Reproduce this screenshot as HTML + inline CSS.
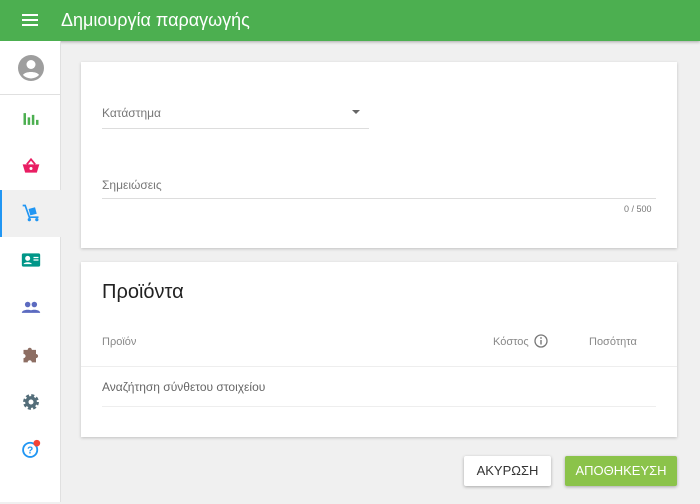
<!DOCTYPE html>
<html><head><meta charset="utf-8"><style>
*{margin:0;padding:0;box-sizing:border-box}
body{width:700px;height:504px;background:#f0f0f0;font-family:"Liberation Sans",sans-serif;position:relative;overflow:hidden}
.top{position:absolute;left:0;top:0;width:700px;height:41px;background:#4caf50;box-shadow:0 1px 3px rgba(0,0,0,.3);color:#fff}
.top .t{position:absolute;left:61px;top:10px;font-size:18px}
.side{position:absolute;left:0;top:41px;width:61px;height:461px;background:#fff;border-right:1px solid #e0e0e0}
.ic{position:absolute;left:21px;width:20px;height:20px}
.card{position:absolute;left:81px;width:596px;background:#fff;box-shadow:0 1px 3px rgba(0,0,0,.2)}
.lbl{position:absolute;font-size:12px;color:#777}
.line{position:absolute;height:1px;background:#ddd}
.btn{position:absolute;top:456px;height:30px;font-size:13px;text-align:center;line-height:30px;box-shadow:0 1px 3px rgba(0,0,0,.3);border-radius:2px}
</style></head><body>
<div class="top">
<svg style="position:absolute;left:22px;top:13px" width="16" height="14"><rect y="1" width="16" height="2" fill="#fff"/><rect y="6" width="16" height="2" fill="#fff"/><rect y="11" width="16" height="2" fill="#fff"/></svg>
<div class="t">Δημιουργία παραγωγής</div></div>
<div class="side">
<svg style="position:absolute;left:18px;top:14px" width="26" height="26" viewBox="0 0 26 26"><circle cx="13" cy="13" r="13" fill="#9e9e9e"/><circle cx="13" cy="9.5" r="4.5" fill="#fff"/><path d="M5 20c2-4 14-4 16 0a11 11 0 0 1-16 0z" fill="#fff"/></svg>
<div style="position:absolute;left:0;top:53px;width:61px;height:1px;background:#e0e0e0"></div>
<svg class="ic" style="top:68px" viewBox="0 0 24 24"><path d="M3 5h3v14H3zM8 10h3v9H8zM13 7h3v12h-3zM18 13h3v6h-3z" fill="#4caf50"/></svg>
<svg class="ic" style="top:115px" viewBox="0 0 24 24"><path d="M2 10h20l-3 10H5z" fill="#e91e63"/><path d="M7 10l5-6 5 6" stroke="#e91e63" stroke-width="2.2" fill="none"/><circle cx="12" cy="15" r="1.8" fill="#fff"/></svg>
<div style="position:absolute;left:0;top:149px;width:61px;height:47px;background:#f0f0f0;border-left:2px solid #2196f3"></div>
<svg class="ic" style="top:162px" viewBox="0 0 24 24"><path d="M2 3h3l5 14h11" stroke="#2196f3" stroke-width="2" fill="none"/><rect x="10" y="6" width="8" height="8" fill="#2196f3" transform="rotate(-15 14 10)"/><circle cx="10" cy="20" r="2" fill="#2196f3"/><circle cx="19" cy="20" r="2" fill="#2196f3"/></svg>
<svg class="ic" style="top:209px" viewBox="0 0 24 24"><rect x="1" y="4" width="22" height="16" rx="2" fill="#009688"/><circle cx="8" cy="10" r="3" fill="#fff"/><path d="M3 17c1-3 9-3 10 0z" fill="#fff"/><path d="M15 9h6M15 12h6" stroke="#fff" stroke-width="1.5"/></svg>
<svg class="ic" style="top:256px" viewBox="0 0 24 24"><circle cx="8" cy="9" r="3.3" fill="#5c6bc0"/><circle cx="16" cy="9" r="3.3" fill="#5c6bc0"/><path d="M1 19c0-5 14-5 14 0zM9 19c0-5 14-5 14 0z" fill="#5c6bc0"/></svg>
<svg class="ic" style="top:303px" viewBox="0 0 24 24"><path d="M3 7h5a2.5 2.5 0 0 1 5 0h5v5a2.5 2.5 0 0 1 0 5v5h-5a2.5 2.5 0 0 0-5 0H3v-5a2.5 2.5 0 0 0 0-5z" fill="#8d6e63"/></svg>
<svg class="ic" style="top:351px" viewBox="0 0 24 24"><circle cx="12" cy="12" r="7" fill="none" stroke="#546e7a" stroke-width="5" stroke-dasharray="3.2 2.3"/><circle cx="12" cy="12" r="7" fill="#546e7a"/><circle cx="12" cy="12" r="3" fill="#fff"/></svg>
<svg class="ic" style="top:398px" viewBox="0 0 24 24"><circle cx="11" cy="13" r="8.5" fill="none" stroke="#2196f3" stroke-width="2.2"/><text x="11" y="17.5" font-size="12" font-weight="bold" text-anchor="middle" fill="#2196f3" font-family="Liberation Sans">?</text><circle cx="19" cy="5" r="4" fill="#f44336"/></svg>
</div>
<div class="card" style="top:62px;height:186px">
<div class="lbl" style="left:21px;top:44px">Κατάστημα</div>
<svg style="position:absolute;left:271px;top:48px" width="8" height="4"><path d="M0 0h8L4 4z" fill="#666"/></svg>
<div class="line" style="left:21px;top:66px;width:267px"></div>
<div class="lbl" style="left:21px;top:116px">Σημειώσεις</div>
<div class="line" style="left:21px;top:136px;width:554px"></div>
<div class="lbl" style="left:543px;top:142px;font-size:9px">0 / 500</div>
</div>
<div class="card" style="top:262px;height:175px">
<div style="position:absolute;left:21px;top:19px;font-size:20px;color:#222">Προϊόντα</div>
<div class="lbl" style="left:21px;top:74px;font-size:11px;color:#888">Προϊόν</div>
<div class="lbl" style="left:412px;top:74px;font-size:11px;color:#888">Κόστος</div>
<svg style="position:absolute;left:453px;top:72px" width="14" height="14"><circle cx="7" cy="7" r="6" fill="none" stroke="#777" stroke-width="1.3"/><rect x="6.3" y="6" width="1.4" height="4.5" fill="#777"/><circle cx="7" cy="4" r=".9" fill="#777"/></svg>
<div class="lbl" style="left:508px;top:74px;font-size:11px;color:#888">Ποσότητα</div>
<div class="line" style="left:0;top:104px;width:596px;background:#eee"></div>
<div class="lbl" style="left:21px;top:118px;color:#666">Αναζήτηση σύνθετου στοιχείου</div>
<div class="line" style="left:21px;top:144px;width:554px;background:#eee"></div>
</div>
<div class="btn" style="left:464px;width:87px;background:#fff;color:#333">ΑΚΥΡΩΣΗ</div>
<div class="btn" style="left:565px;width:112px;background:#8bc34a;color:#fff">ΑΠΟΘΗΚΕΥΣΗ</div>
</body></html>
